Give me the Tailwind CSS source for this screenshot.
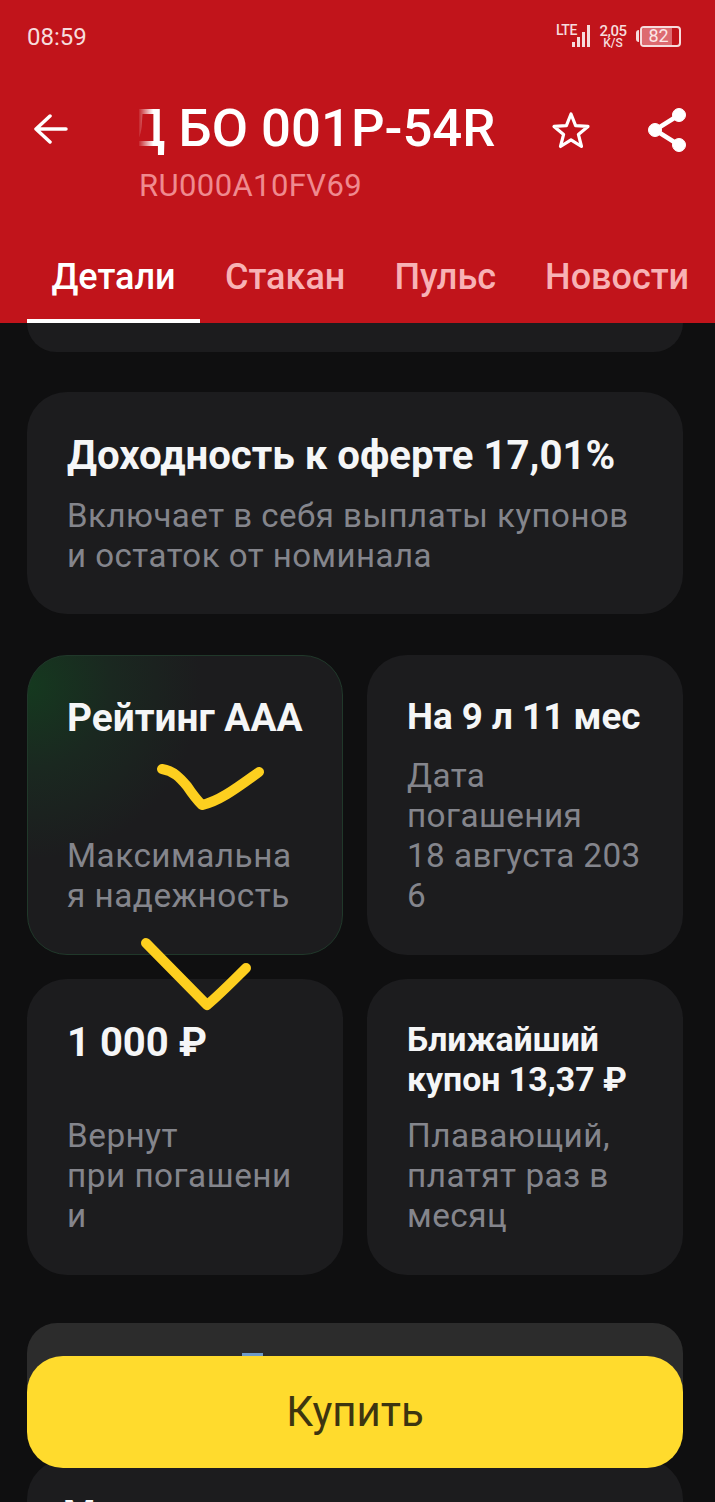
<!DOCTYPE html>
<html lang="ru"><head><meta charset="utf-8">
<script src="https://cdn.jsdelivr.net/npm/@tailwindcss/browser@4"></script>
</head>
<body class="m-0">
<div class="relative w-[715px] h-[1502px] overflow-hidden bg-[#0f0f10] font-['Roboto',sans-serif]">
  <header class="h-[323px] bg-[#c1141b] text-white flex flex-col">
    <div class="h-[74px] pl-[27px] pr-[34px] flex items-center justify-between">
      <span class="text-[24px] leading-none text-[#f6dcdd] mt-[-1px]">08:59</span>
      <div class="flex items-center mt-[-2px]">
        <div class="relative w-[36px] h-[24px] text-[#f6dcdd]">
          <span class="absolute left-0 top-[-1px] text-[14px] font-medium leading-[14px] tracking-[-0.5px]">LTE</span>
          <svg class="absolute left-[15px] top-[0px]" width="20" height="24" viewBox="0 0 20 24" fill="currentColor"><rect x="1" y="18" width="3" height="5"/><rect x="6" y="13" width="3" height="10"/><rect x="11" y="8" width="3" height="15"/><rect x="16" y="1" width="3" height="22"/></svg>
        </div>
        <div class="ml-[6px] w-[30px] flex flex-col items-center text-[#f6dcdd] font-medium">
          <span class="text-[15px] leading-[13px] tracking-[-0.5px]">2,05</span>
          <span class="text-[12px] leading-[10px]">K/S</span>
        </div>
        <div class="ml-[8px] w-[3px] h-[12px] rounded-l-sm bg-[#f6dcdd]"></div>
        <div class="ml-[1px] w-[41px] h-[21px] rounded-[4px] border-2 border-[#f6dcdd] relative flex items-center overflow-hidden">
          <div class="h-full w-[80%] bg-[#dd6a70]"></div>
          <span class="absolute inset-0 flex items-center justify-center text-[18px] leading-none text-[#fbe6e7] pr-[4px]">82</span>
        </div>
      </div>
    </div>
    <div class="relative flex items-start h-[98px] mt-[8px]">
      <svg class="absolute left-[34px] top-[32px]" width="34" height="30" viewBox="0 0 34 30" fill="none" stroke="white" stroke-width="3.5" stroke-linecap="round" stroke-linejoin="round"><path d="M2 15H32M16 2L2 15L16 28"/></svg>
      <div class="absolute left-[139px] top-[18px] w-[370px] overflow-hidden">
        <div class="text-[52.7px] leading-[56px] font-medium whitespace-nowrap ml-[-13px]">
          <span class="bg-[linear-gradient(90deg,#c1141b00_30%,#ffffff_70%)] bg-clip-text text-transparent">Д</span> БО 001P-54R
        </div>
      </div>
      <div class="absolute left-[139px] top-[86px] text-[31px] leading-[36px] text-[#ef8a8f] tracking-[0.4px]">RU000A10FV69</div>
      <svg class="absolute left-[551px] top-[29px]" width="40" height="38" viewBox="0 0 40 38" fill="none" stroke="white" stroke-width="3.2" stroke-linejoin="round"><path d="M20 3L24.6 14.6L37 15.4L27.4 23.4L30.5 35.5L20 28.8L9.5 35.5L12.6 23.4L3 15.4L15.4 14.6Z"/></svg>
      <svg class="absolute left-[647px] top-[26px]" width="40" height="44" viewBox="0 0 40 44" fill="white" stroke="white"><circle cx="32" cy="7" r="6.5"/><circle cx="8" cy="22" r="6.5"/><circle cx="32" cy="37" r="6.5"/><path fill="none" stroke-width="4.5" d="M32 7L8 22L32 37"/></svg>
    </div>
    <nav class="flex mt-auto h-[75px] pl-[27px] text-[36px] font-medium leading-none text-[#f8b2b5] whitespace-nowrap relative">
      <div class="w-[173px] h-full flex justify-center pt-[11px] border-b-[4px] border-white text-white"><span>Детали</span></div>
      <span class="ml-[25px] pt-[11px]">Стакан</span>
      <span class="ml-[49px] pt-[11px]">Пульс</span>
      <span class="ml-[49px] pt-[11px]">Новости</span>
    </nav>
  </header>

  <main class="pl-[27px] pr-[32px] flex flex-col">
    <div class="h-[29px] bg-[#1c1c1e] rounded-b-[36px]"></div>
    <section class="mt-[40px] h-[222px] bg-[#1c1c1e] rounded-[40px] px-[40px] pt-[42px]">
      <h2 class="text-[40.2px] leading-[44px] font-bold text-[#f5f6f7] whitespace-nowrap">Доходность к оферте 17,01%</h2>
      <p class="mt-[18px] text-[33px] leading-[40px] text-[#84858c] tracking-[0.5px] whitespace-nowrap">Включает в себя выплаты купонов<br>и остаток от номинала</p>
    </section>
    <div class="mt-[41px] grid grid-cols-2 gap-x-[24px] gap-y-[24px] grid-rows-[300px_296px]">
      <article class="relative bg-[radial-gradient(circle_at_0%_10%,#15391f_0%,#1a2820_20%,#1c1c1e_42%)] border border-[#20382a] rounded-[40px] pl-[39px] pt-[40px]">
        <h3 class="text-[38.8px] leading-[44px] font-bold text-[#f5f6f7] whitespace-nowrap">Рейтинг ААА</h3>
        <p class="mt-[96px] text-[33.3px] leading-[40px] text-[#84858c] tracking-[0.5px] whitespace-nowrap">Максимальна<br>я надежность</p>
      </article>
      <article class="bg-[#1c1c1e] rounded-[40px] pl-[40px] pt-[40px]">
        <h3 class="text-[36.8px] leading-[44px] font-bold text-[#f5f6f7] whitespace-nowrap">На 9 л 11 мес</h3>
        <p class="mt-[17px] text-[33.3px] leading-[40px] text-[#84858c] tracking-[0.4px] whitespace-nowrap">Дата<br>погашения<br>18 августа 203<br>6</p>
      </article>
      <article class="bg-[#1c1c1e] rounded-[40px] pl-[40px] pt-[42px]">
        <h3 class="text-[40px] leading-[44px] font-bold text-[#f5f6f7] whitespace-nowrap">1 000 ₽</h3>
        <p class="mt-[51px] text-[33.3px] leading-[40px] text-[#84858c] tracking-[0.5px] whitespace-nowrap">Вернут<br>при погашени<br>и</p>
      </article>
      <article class="bg-[#1c1c1e] rounded-[40px] pl-[40px] pt-[41px]">
        <h3 class="text-[33.8px] leading-[40px] font-bold text-[#f5f6f7] whitespace-nowrap">Ближайший<br>купон 13,37 ₽</h3>
        <p class="mt-[16px] text-[33.3px] leading-[40px] text-[#84858c] tracking-[0.5px] whitespace-nowrap">Плавающий,<br>платят раз в<br>месяц</p>
      </article>
    </div>
    <div class="relative mt-[48px] h-[100px] bg-[#2c2c2c] rounded-[30px]">
      <div class="absolute left-[215px] top-[30px] w-[21px] h-[10px] bg-[#6f9bc8]"></div>
    </div>
    <div class="mt-[36px] h-[120px] bg-[#1c1c1e] rounded-[40px] pl-[36px] pt-[33px]">
      <span class="text-[37px] leading-[44px] font-bold text-[#f5f6f7]">М</span>
    </div>
  </main>

  <svg class="absolute left-[150px] top-[751px] pointer-events-none" width="120" height="70" viewBox="0 0 120 70" fill="none" stroke="#fdcf1f" stroke-width="10" stroke-linecap="round" stroke-linejoin="round"><path d="M12 18C24 20 30 27 37 35C43 44 48 50 52 54C70 50 88 36 109 21"/></svg>
  <svg class="absolute left-[135px] top-[931px] pointer-events-none" width="120" height="85" viewBox="0 0 120 85" fill="none" stroke="#fdcf1f" stroke-width="10" stroke-linecap="round" stroke-linejoin="round"><path d="M11 12L72 74C82 66 98 50 111 37"/></svg>

  <button class="absolute left-[27px] top-[1356px] w-[656px] h-[112px] rounded-[36px] bg-[#ffdb2d] text-[#3d3510] text-[42px] leading-none flex items-center justify-center">Купить</button>
</div>
</body></html>
